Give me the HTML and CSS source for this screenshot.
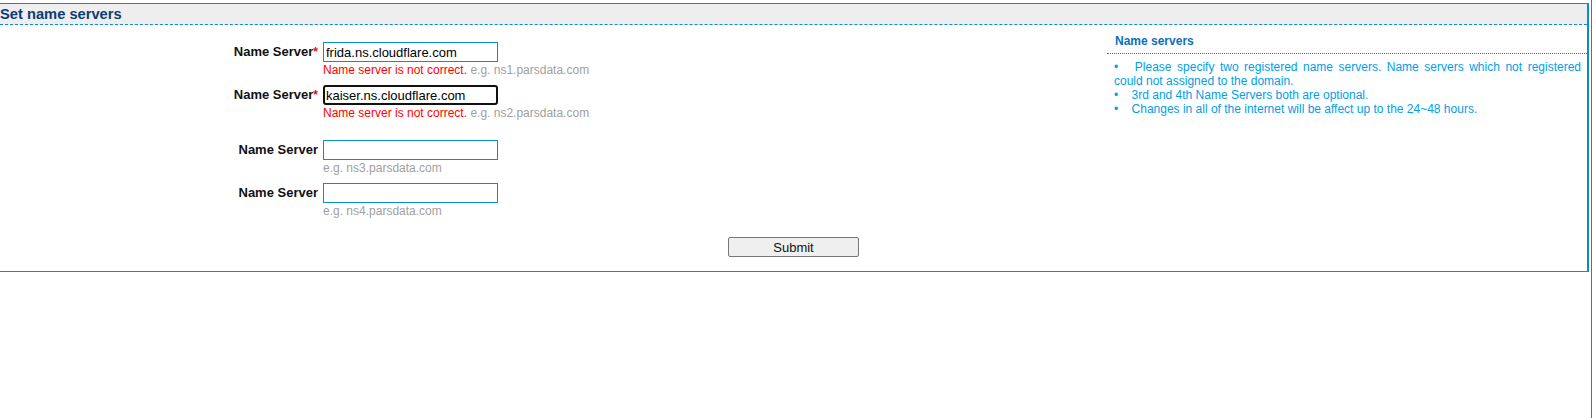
FILE: index.html
```html
<!DOCTYPE html>
<html>
<head>
<meta charset="utf-8">
<title>Set name servers</title>
<link rel="stylesheet" href="styles.css">
</head>
<body>
<div class="page">
  <div class="box">
    <div class="box-header">Set name servers</div>
    <div class="box-body">
      <div class="main">
        <form class="ns-form">
          <div class="row">
            <label class="lbl">Name Server<span class="req">*</span></label>
            <div class="field">
              <input class="inp" type="text" value="frida.ns.cloudflare.com">
              <div class="msg"><span class="err">Name server is not correct.</span> <span class="hint">e.g. ns1.parsdata.com</span></div>
            </div>
          </div>
          <div class="row">
            <label class="lbl">Name Server<span class="req">*</span></label>
            <div class="field">
              <input class="inp focused" type="text" value="kaiser.ns.cloudflare.com">
              <div class="msg"><span class="err">Name server is not correct.</span> <span class="hint">e.g. ns2.parsdata.com</span></div>
            </div>
          </div>
          <div class="row spaced">
            <label class="lbl">Name Server</label>
            <div class="field">
              <input class="inp" type="text" value="">
              <div class="msg"><span class="hint">e.g. ns3.parsdata.com</span></div>
            </div>
          </div>
          <div class="row">
            <label class="lbl">Name Server</label>
            <div class="field">
              <input class="inp" type="text" value="">
              <div class="msg"><span class="hint">e.g. ns4.parsdata.com</span></div>
            </div>
          </div>
        </form>
      </div>
      <div class="side">
        <div class="side-title">Name servers</div>
        <div class="side-list">
          <div class="item">•&nbsp;&nbsp; Please specify two registered name servers. Name servers which not registered could not assigned to the domain.</div>
          <div class="item">•&nbsp;&nbsp;&nbsp; 3rd and 4th Name Servers both are optional.</div>
          <div class="item">•&nbsp;&nbsp;&nbsp; Changes in all of the internet will be affect up to the 24~48 hours.</div>
        </div>
      </div>
    </div>
    <div class="actions">
      <button class="btn" type="button">Submit</button>
    </div>
  </div>
</div>
</body>
</html>
```

FILE: styles.css
```css
html, body {
  margin: 0;
  padding: 0;
  background: #ffffff;
}
body {
  font-family: "Liberation Sans", Arial, sans-serif;
  font-size: 12px;
  color: #000;
}
.page {
  width: 1592px;
  min-height: 418px;
  border-right: 1px solid #0b8bd1;
  padding-top: 3px;
  box-sizing: border-box;
}
.box {
  width: 1589px;
  box-sizing: border-box;
  border: 1px solid #0b8bd1;
  border-left: none;
  border-right-width: 2px;
}
.box-header {
  height: 20px;
  line-height: 20px;
  background: #eeeeee;
  border-bottom: 1px dashed #0b8bd1;
  color: #0b3d78;
  font-weight: bold;
  font-size: 14.7px;
  padding-left: 0;
  white-space: nowrap;
}
.box-body {
  display: flex;
}
.main {
  flex: 1;
  padding-top: 17px;
}
.row {
  display: flex;
  align-items: flex-start;
  margin-bottom: 8px;
}
.row.spaced {
  margin-top: 20px;
}
.lbl {
  width: 318px;
  text-align: right;
  font-weight: bold;
  font-size: 13px;
  line-height: 20px;
  color: #111;
  padding-right: 5px;
  box-sizing: content-box;
}
.req {
  color: #e01010;
  font-weight: bold;
  font-size: 12px;
}
.field {
  display: flex;
  flex-direction: column;
}
.inp {
  width: 175px;
  height: 20px;
  box-sizing: border-box;
  border: 1px solid #0b8bd1;
  padding: 0 2px;
  margin: 0;
  font-family: "Liberation Sans", Arial, sans-serif;
  font-size: 13px;
  color: #000;
  background: #fff;
  outline: none;
}
.inp.focused {
  border: 2px solid #111;
  border-radius: 3px;
  padding: 0 1px;
}
.msg {
  line-height: 14px;
  font-size: 12px;
  white-space: nowrap;
  margin-top: 1px;
}
.err {
  color: #ff0000;
}
.hint {
  color: #a0a0a0;
}
.side {
  width: 480px;
  padding-top: 9px;
}
.side-title {
  font-weight: bold;
  color: #0a70c0;
  line-height: 14px;
  padding: 0 0 5px 8px;
  border-bottom: 1px dotted #0b8bd1;
}
.side-list {
  padding: 6px 6px 0 7px;
  color: #00a0e6;
  line-height: 14px;
  text-align: justify;
}
.actions {
  display: flex;
  justify-content: center;
  padding: 11px 0 14px 0;
}
.btn {
  width: 131px;
  height: 20px;
  background: #efefef;
  border: 1px solid #767676;
  border-radius: 2px;
  font-family: "Liberation Sans", Arial, sans-serif;
  font-size: 13px;
  color: #111;
  padding: 0;
}
```
